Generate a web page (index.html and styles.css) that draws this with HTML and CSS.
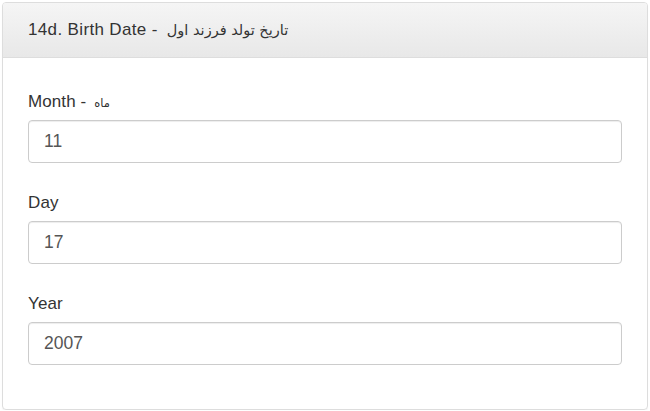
FILE: index.html
```html
<!DOCTYPE html>
<html>
<head>
<meta charset="utf-8">
<link rel="stylesheet" href="styles.css">
</head>
<body>
<div class="panel">
  <div class="panel-heading">14d. Birth Date - <span class="fa">تاریخ تولد فرزند اول</span></div>
  <div class="panel-body">
    <div class="form-group">
      <label class="label">Month - <span class="fa-small">ماه</span></label>
      <div class="input">11</div>
    </div>
    <div class="form-group">
      <label class="label">Day</label>
      <div class="input">17</div>
    </div>
    <div class="form-group">
      <label class="label">Year</label>
      <div class="input">2007</div>
    </div>
  </div>
</div>
</body>
</html>
```
FILE: styles.css
```css
html, body {
  margin: 0;
  padding: 0;
  background: #fff;
}
body {
  padding: 2px 2px 0 2px;
  font-family: "Liberation Sans", Arial, "DejaVu Sans", sans-serif;
  color: #333;
}
.panel {
  width: 646px;
  height: 408px;
  box-sizing: border-box;
  border: 1px solid #dddddd;
  border-radius: 4px;
  overflow: hidden;
  box-shadow: 0 1px 1px rgba(0,0,0,0.05);
}
.panel-heading {
  height: 55px;
  box-sizing: border-box;
  border-bottom: 1px solid #dddddd;
  background: linear-gradient(to bottom, #f5f5f5 0%, #e8e8e8 100%);
  padding: 0 25px;
  display: flex;
  align-items: center;
  white-space: pre;
  font-size: 17px;
  letter-spacing: 0.35px;
  color: #333;
}
.fa {
  font-family: "DejaVu Sans", sans-serif;
  font-size: 14.5px;
  letter-spacing: 0;
  margin-left: 4px;
}
.fa-small {
  font-family: "DejaVu Sans", sans-serif;
  font-size: 11.5px;
  line-height: 1;
  letter-spacing: 0;
  margin-left: 3px;
}
.panel-body {
  padding: 33px 25px 0 25px;
  display: flex;
  flex-direction: column;
  gap: 29px;
}
.form-group {
  display: flex;
  flex-direction: column;
  gap: 7px;
}
.label {
  display: block;
  height: 22px;
  font-size: 17px;
  line-height: 22px;
  letter-spacing: 0.1px;
  color: #333;
}
.input {
  height: 43px;
  box-sizing: border-box;
  border: 1px solid #cccccc;
  border-radius: 4px;
  padding: 0 15px;
  display: flex;
  align-items: center;
  font-size: 17.5px;
  color: #555;
  box-shadow: inset 0 1px 1px rgba(0,0,0,0.075);
}
```
